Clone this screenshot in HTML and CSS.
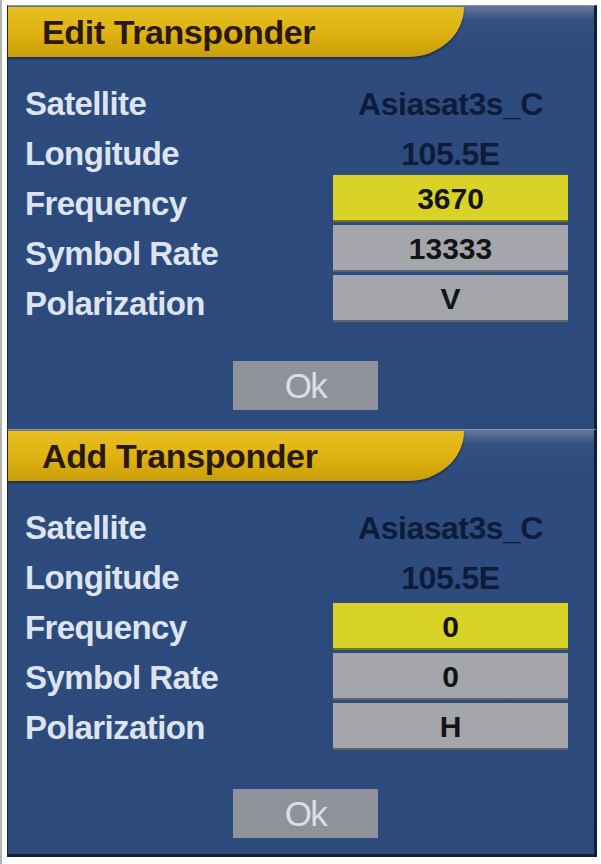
FILE: index.html
```html
<!DOCTYPE html>
<html>
<head>
<meta charset="utf-8">
<link rel="stylesheet" href="styles.css">
</head>
<body>
<div class="screen">
  <section class="panel edit">
    <div class="head"><div class="tab">Edit Transponder</div></div>
    <div class="rows">
      <div class="row"><span class="label">Satellite</span><span class="value plain">Asiasat3s_C</span></div>
      <div class="row"><span class="label">Longitude</span><span class="value plain">105.5E</span></div>
      <div class="row"><span class="label">Frequency</span><span class="value hl">3670</span></div>
      <div class="row"><span class="label">Symbol Rate</span><span class="value box">13333</span></div>
      <div class="row"><span class="label">Polarization</span><span class="value box">V</span></div>
    </div>
    <div class="actions"><div class="ok">Ok</div></div>
  </section>
  <section class="panel add">
    <div class="head"><div class="tab">Add Transponder</div></div>
    <div class="rows">
      <div class="row"><span class="label">Satellite</span><span class="value plain">Asiasat3s_C</span></div>
      <div class="row"><span class="label">Longitude</span><span class="value plain">105.5E</span></div>
      <div class="row"><span class="label">Frequency</span><span class="value hl">0</span></div>
      <div class="row"><span class="label">Symbol Rate</span><span class="value box">0</span></div>
      <div class="row"><span class="label">Polarization</span><span class="value box">H</span></div>
    </div>
    <div class="actions"><div class="ok">Ok</div></div>
  </section>
</div>
</body>
</html>
```

FILE: styles.css
```css
html, body {
  margin: 0;
  background: #ffffff;
}
body {
  font-family: "Liberation Sans", Arial, sans-serif;
  width: 601px;
  height: 864px;
  overflow: hidden;
}
.screen {
  box-sizing: border-box;
  width: 601px;
  padding: 5px 4px 0 5px;
  border-left: 2px solid #b4b4b4;
  height: 864px;
}
.panel {
  box-sizing: border-box;
  height: 424px;
  border-top: 1px solid #8d93a0;
  border-left: 1px solid #1a2848;
  border-right: 3px solid #131d35;
  background: linear-gradient(#66779c 0, #34517f 14px, #2d4b7d 40px, #2c4a7c 100%);
}
.panel.add {
  height: 428px;
  border-bottom: 3px solid #131d35;
}
.head {
  height: 52px;
  padding-top: 1px;
  box-sizing: border-box;
}
.tab {
  box-sizing: border-box;
  width: 456px;
  height: 50px;
  padding-left: 34px;
  background: linear-gradient(#e8c020 0, #dcb010 60%, #c99d08 100%);
  border-bottom-right-radius: 56px 50px;
  box-shadow: 0 2px 2px rgba(10, 15, 30, 0.45);
  color: #2a190a;
  font-size: 34px;
  font-weight: bold;
  line-height: 50px;
  letter-spacing: -0.4px;
}
.rows {
  margin-top: 17px;
  padding-left: 17px;
  display: flex;
  flex-direction: column;
  gap: 3px;
}
.add .rows {
  margin-top: 21px;
}
.row {
  display: flex;
  align-items: center;
  height: 47px;
}
.label {
  width: 308px;
  color: #dde4f0;
  font-size: 33px;
  font-weight: bold;
  letter-spacing: -0.6px;
  line-height: 38px;
}
.edit .label {
  padding-top: 10px;
}
.add .label {
  padding-top: 3px;
}
.value {
  box-sizing: border-box;
  width: 235px;
  height: 47px;
  padding-top: 3px;
  display: flex;
  align-items: center;
  justify-content: center;
  color: #141414;
  font-size: 30px;
  font-weight: bold;
}
.plain {
  color: #0e1b3b;
  font-size: 32px;
  letter-spacing: -0.5px;
}
.edit .plain {
  padding-top: 12px;
}
.hl {
  background: #d9d327;
  border-bottom: 2px solid #77721e;
}
.box {
  background: #a5a6ab;
  border-bottom: 2px solid #5d6270;
}
.actions {
  margin-top: 39px;
  padding-left: 225px;
}
.ok {
  width: 145px;
  height: 49px;
  background: #8f929b;
  color: #dcdee3;
  font-size: 35px;
  line-height: 49px;
  text-align: center;
  letter-spacing: -1.5px;
}
```
